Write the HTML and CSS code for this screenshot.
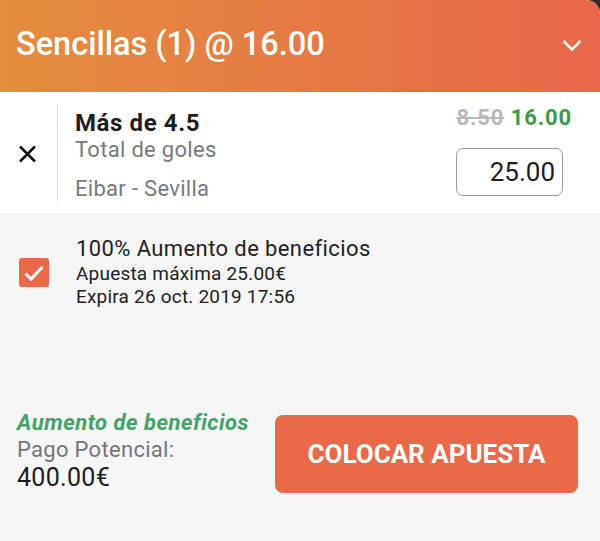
FILE: index.html
```html
<!DOCTYPE html>
<html lang="es">
<head>
	<meta charset="utf-8">
	<title>Sencillas</title>
	<link rel="stylesheet" href="styles.css">
</head>
<body>
	<div class="slip">
		<div class="slip-header">
			<h1 class="slip-title">Sencillas (1) @ 16.00</h1>
			<svg class="chevron" width="20" height="13" viewBox="0 0 20 13">
				<path d="M1.5 2 L10 10.5 L18.5 2" fill="none" stroke="#fff" stroke-width="2.5" />
			</svg>
		</div>

		<div class="selection">
			<div class="remove">
				<svg width="19" height="18" viewBox="0 0 19 18">
					<path d="M2 1.5 L17 16.5 M17 1.5 L2 16.5" stroke="#111" stroke-width="2.5" />
				</svg>
			</div>
			<div class="selection-info">
				<div class="market-name">Más de 4.5</div>
				<div class="market-type">Total de goles</div>
				<div class="event-name">Eibar - Sevilla</div>
			</div>
			<div class="selection-side">
				<div class="odds"><span class="old-odds">8.50</span> <span class="new-odds">16.00</span></div>
				<div class="stake">25.00</div>
			</div>
		</div>

		<div class="boost">
			<span class="checkbox">
				<svg width="22" height="18" viewBox="0 0 22 18">
					<path d="M2.5 9.5 L8 15 L19.5 3" fill="none" stroke="#fff" stroke-width="3" />
				</svg>
			</span>
			<div class="boost-text">
				<div class="boost-title">100% Aumento de beneficios</div>
				<div class="boost-line">Apuesta máxima 25.00€</div>
				<div class="boost-line">Expira 26 oct. 2019 17:56</div>
			</div>
		</div>

		<div class="footer">
			<div class="payout">
				<div class="payout-tag">Aumento de beneficios</div>
				<div class="payout-label">Pago Potencial:</div>
				<div class="payout-value">400.00€</div>
			</div>
			<button class="place-bet">COLOCAR APUESTA</button>
		</div>
	</div>
</body>
</html>
```

FILE: styles.css
```css
* {
	margin: 0;
	padding: 0;
	box-sizing: border-box;
}

body {
	font-family: Roboto, 'Noto Sans', sans-serif;
	background-color: #2b2b2b;
	width: 600px;
	height: 541px;
	overflow: hidden;
}

.slip {
	background-color: #F6F6F6;
	height: 541px;
	border-top-right-radius: 14px;
	overflow: hidden;
}

/* header */
.slip-header {
	height: 92px;
	display: flex;
	align-items: center;
	justify-content: space-between;
	padding: 0 18px 4px 16px;
	background: linear-gradient(to right, #E38D3E, #E9674A);
}

.slip-title {
	color: #fff;
	font-size: 32.5px;
	font-weight: 500;
}

.chevron {
	margin-top: 2px;
}

/* selection row */
.selection {
	background-color: #fff;
	height: 121px;
	display: flex;
	padding-right: 28px;
}

.remove {
	align-self: center;
	width: 58px;
	height: 96px;
	border-right: 1px solid #dedede;
	display: flex;
	align-items: center;
	justify-content: center;
	padding: 2px 2px 0 0;
}

.selection-info {
	flex: 1;
	padding: 17px 0 0 17px;
}

.market-name {
	font-size: 24px;
	font-weight: 700;
	letter-spacing: 0.6px;
	color: #1d1d1d;
	line-height: 28px;
}

.market-type,
.event-name {
	font-size: 22px;
	letter-spacing: 0.3px;
	color: #7a7a7a;
	line-height: 26px;
}

.event-name {
	margin-top: 13px;
}

.selection-side {
	display: flex;
	flex-direction: column;
	align-items: flex-end;
	padding-top: 13px;
}

.odds {
	font-size: 22px;
	font-weight: 700;
	letter-spacing: 0.9px;
	line-height: 26px;
}

.old-odds {
	color: #b9b9b9;
	text-decoration: line-through;
}

.new-odds {
	color: #3F9A45;
}

.stake {
	margin: 17px 9px 0 0;
	width: 107px;
	height: 48px;
	border: 1px solid #9a9a9a;
	border-radius: 7px;
	text-align: right;
	font-size: 26px;
	line-height: 46px;
	padding-right: 7px;
	color: #1d1d1d;
}

/* boost */
.boost {
	display: flex;
	align-items: center;
	padding: 23px 0 0 19px;
}

.checkbox {
	width: 30px;
	height: 29px;
	border-radius: 3px;
	background-color: #EB6849;
	display: flex;
	align-items: center;
	justify-content: center;
	margin-top: 1px;
}

.boost-text {
	padding-left: 27px;
	color: #222;
}

.boost-title {
	font-size: 22px;
	letter-spacing: 0.4px;
	line-height: 26px;
}

.boost-line {
	font-size: 19px;
	letter-spacing: 0.2px;
	line-height: 23px;
}

/* footer */
.footer {
	display: flex;
	align-items: flex-start;
	justify-content: space-between;
	padding: 102px 22px 0 17px;
}

.payout-tag {
	color: #41A36A;
	font-size: 22px;
	font-weight: 700;
	font-style: italic;
	letter-spacing: 0.5px;
	line-height: 26px;
}

.payout-label {
	color: #757575;
	font-size: 22px;
	letter-spacing: 0.3px;
	line-height: 28px;
}

.payout-value {
	color: #1d1d1d;
	font-size: 25px;
	letter-spacing: 0.3px;
	line-height: 28px;
}

.place-bet {
	margin-top: 5px;
	width: 303px;
	height: 78px;
	border: none;
	border-radius: 8px;
	background-color: #EB6849;
	color: #fff;
	font-family: Roboto, sans-serif;
	font-size: 26px;
	font-weight: 700;
}
```
